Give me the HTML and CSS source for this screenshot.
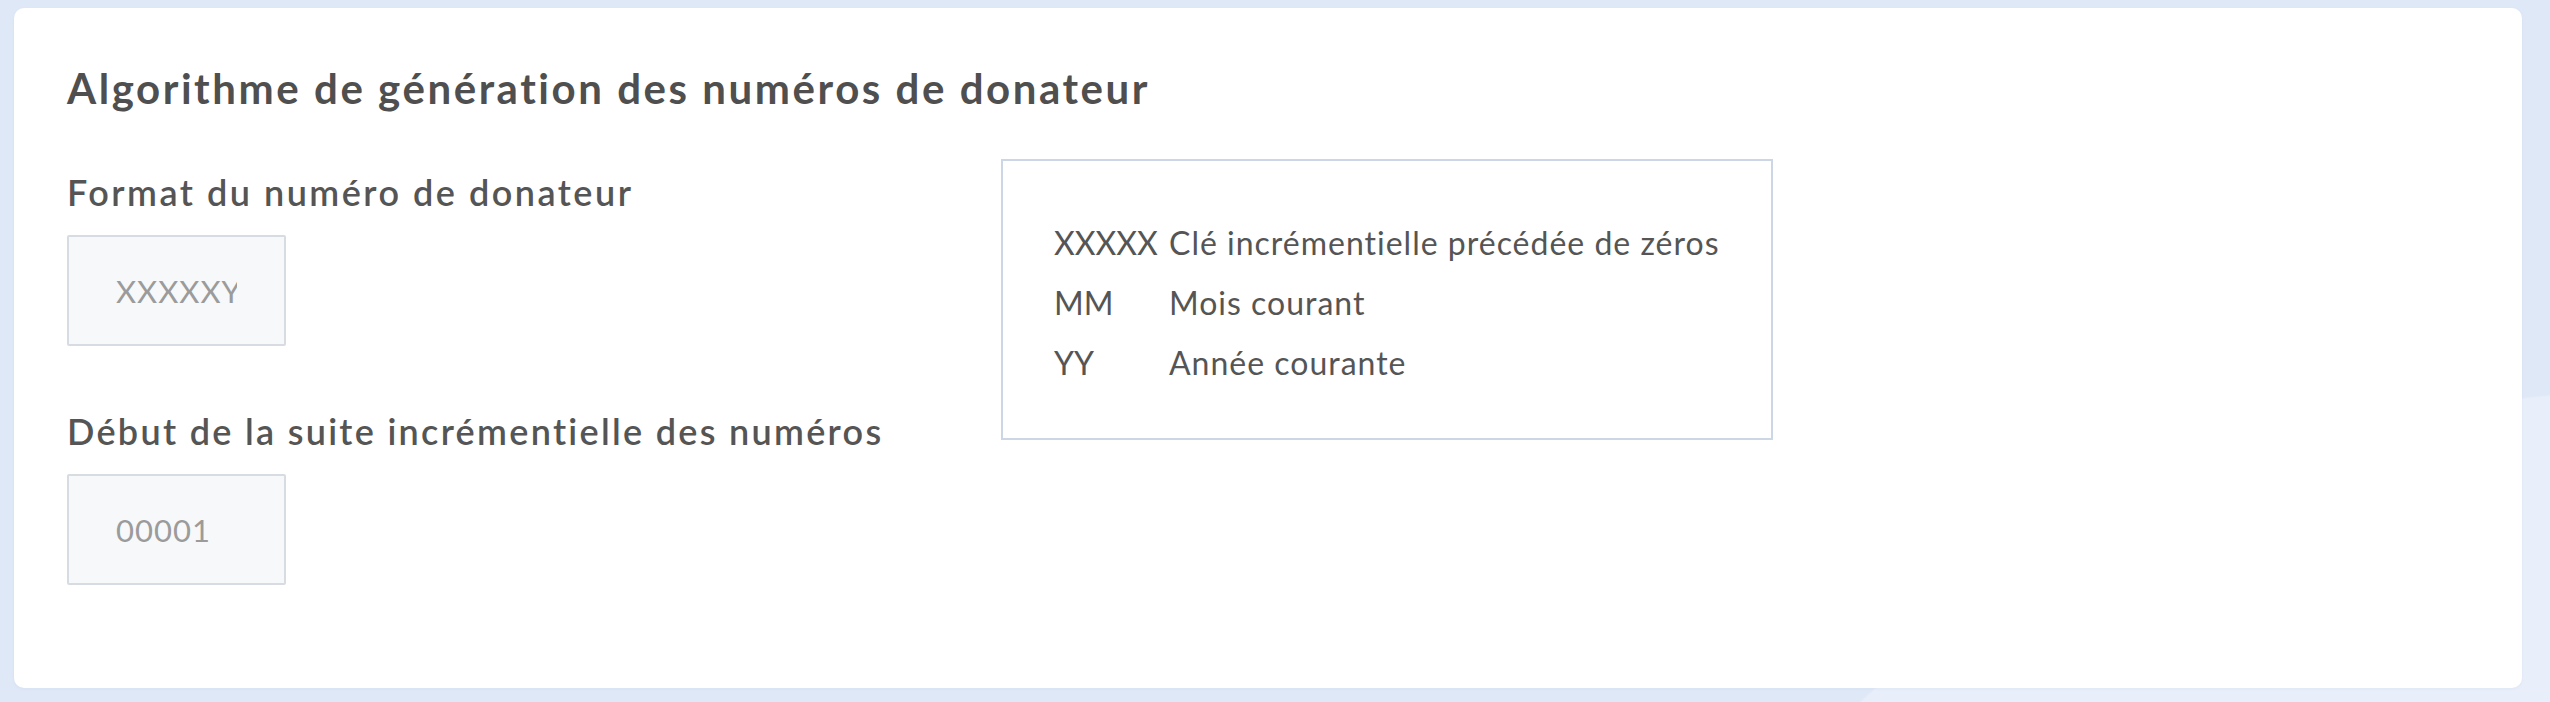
FILE: index.html
```html
<!DOCTYPE html>
<html lang="fr">
<head>
<meta charset="utf-8">
<title>Algorithme de génération des numéros de donateur</title>
<link rel="stylesheet" href="styles.css">
</head>
<body>
<main class="page">
  <section class="card">
    <h2 class="card-title">Algorithme de génération des numéros de donateur</h2>
    <div class="card-body">
      <div class="form-col">
        <label class="field-label field-label-1" for="format">Format du numéro de donateur</label>
        <input class="field-input" id="format" type="text" placeholder="XXXXXYYMM">
        <label class="field-label field-label-2" for="start">Début de la suite incrémentielle des numéros</label>
        <input class="field-input" id="start" type="text" placeholder="00001">
      </div>
      <div class="legend">
        <span class="legend-code">XXXXX</span><span class="legend-desc">Clé incrémentielle précédée de zéros</span>
        <span class="legend-code">MM</span><span class="legend-desc">Mois courant</span>
        <span class="legend-code">YY</span><span class="legend-desc">Année courante</span>
      </div>
    </div>
  </section>
</main>
</body>
</html>
```
FILE: styles.css
```css
* { box-sizing: border-box; }
html, body { margin: 0; height: 100%; }
body {
  font-family: Lato, "Open Sans", sans-serif;
  color: #505050;
  background:
    radial-gradient(circle 1160px at 2650px 1550px, #e8eefa 99.8%, rgba(232,238,250,0) 100%),
    #dfe8f7;
  overflow: hidden;
}
.page {
  padding: 8px 28px 15px 14px;
}
.card {
  background: #ffffff;
  border-radius: 10px;
  padding: 52px 50px 103px 53px;
  box-shadow: 0 1px 3px rgba(120,140,180,0.08);
}
.card-title {
  margin: 0;
  font-size: 42px;
  line-height: 56px;
  font-weight: 700;
  letter-spacing: 2.55px;
  color: #4f4f4f;
}
.card-body {
  display: flex;
  align-items: flex-start;
  gap: 64px;
  margin-top: 43px;
}
.form-col {
  width: 870px;
  display: flex;
  flex-direction: column;
  align-items: flex-start;
  padding-top: 9px;
}
.field-label {
  font-size: 36px;
  line-height: 48px;
  font-weight: 600;
  letter-spacing: 2.3px;
  color: #555555;
}
.field-label-1 { letter-spacing: 2.5px; }
.field-label-2 { margin-top: 61px; }
.field-input {
  margin-top: 19px;
  width: 219px;
  height: 111px;
  border: 2px solid #d7dce2;
  border-radius: 2px;
  background: #f6f8fa;
  padding: 0 47px;
  font-family: Lato, "Open Sans", sans-serif;
  font-size: 31px;
  letter-spacing: 1px;
  color: #9b9b9b;
  outline: none;
}
.field-input::placeholder { color: #9b9b9b; opacity: 1; }
.legend {
  display: grid;
  grid-template-columns: 115px auto;
  border: 2px solid #cdd6e4;
  padding: 52px 52px 45px 51px;
  font-size: 32px;
  line-height: 60px;
  color: #555555;
}
.legend-desc { letter-spacing: 1px; }
```
